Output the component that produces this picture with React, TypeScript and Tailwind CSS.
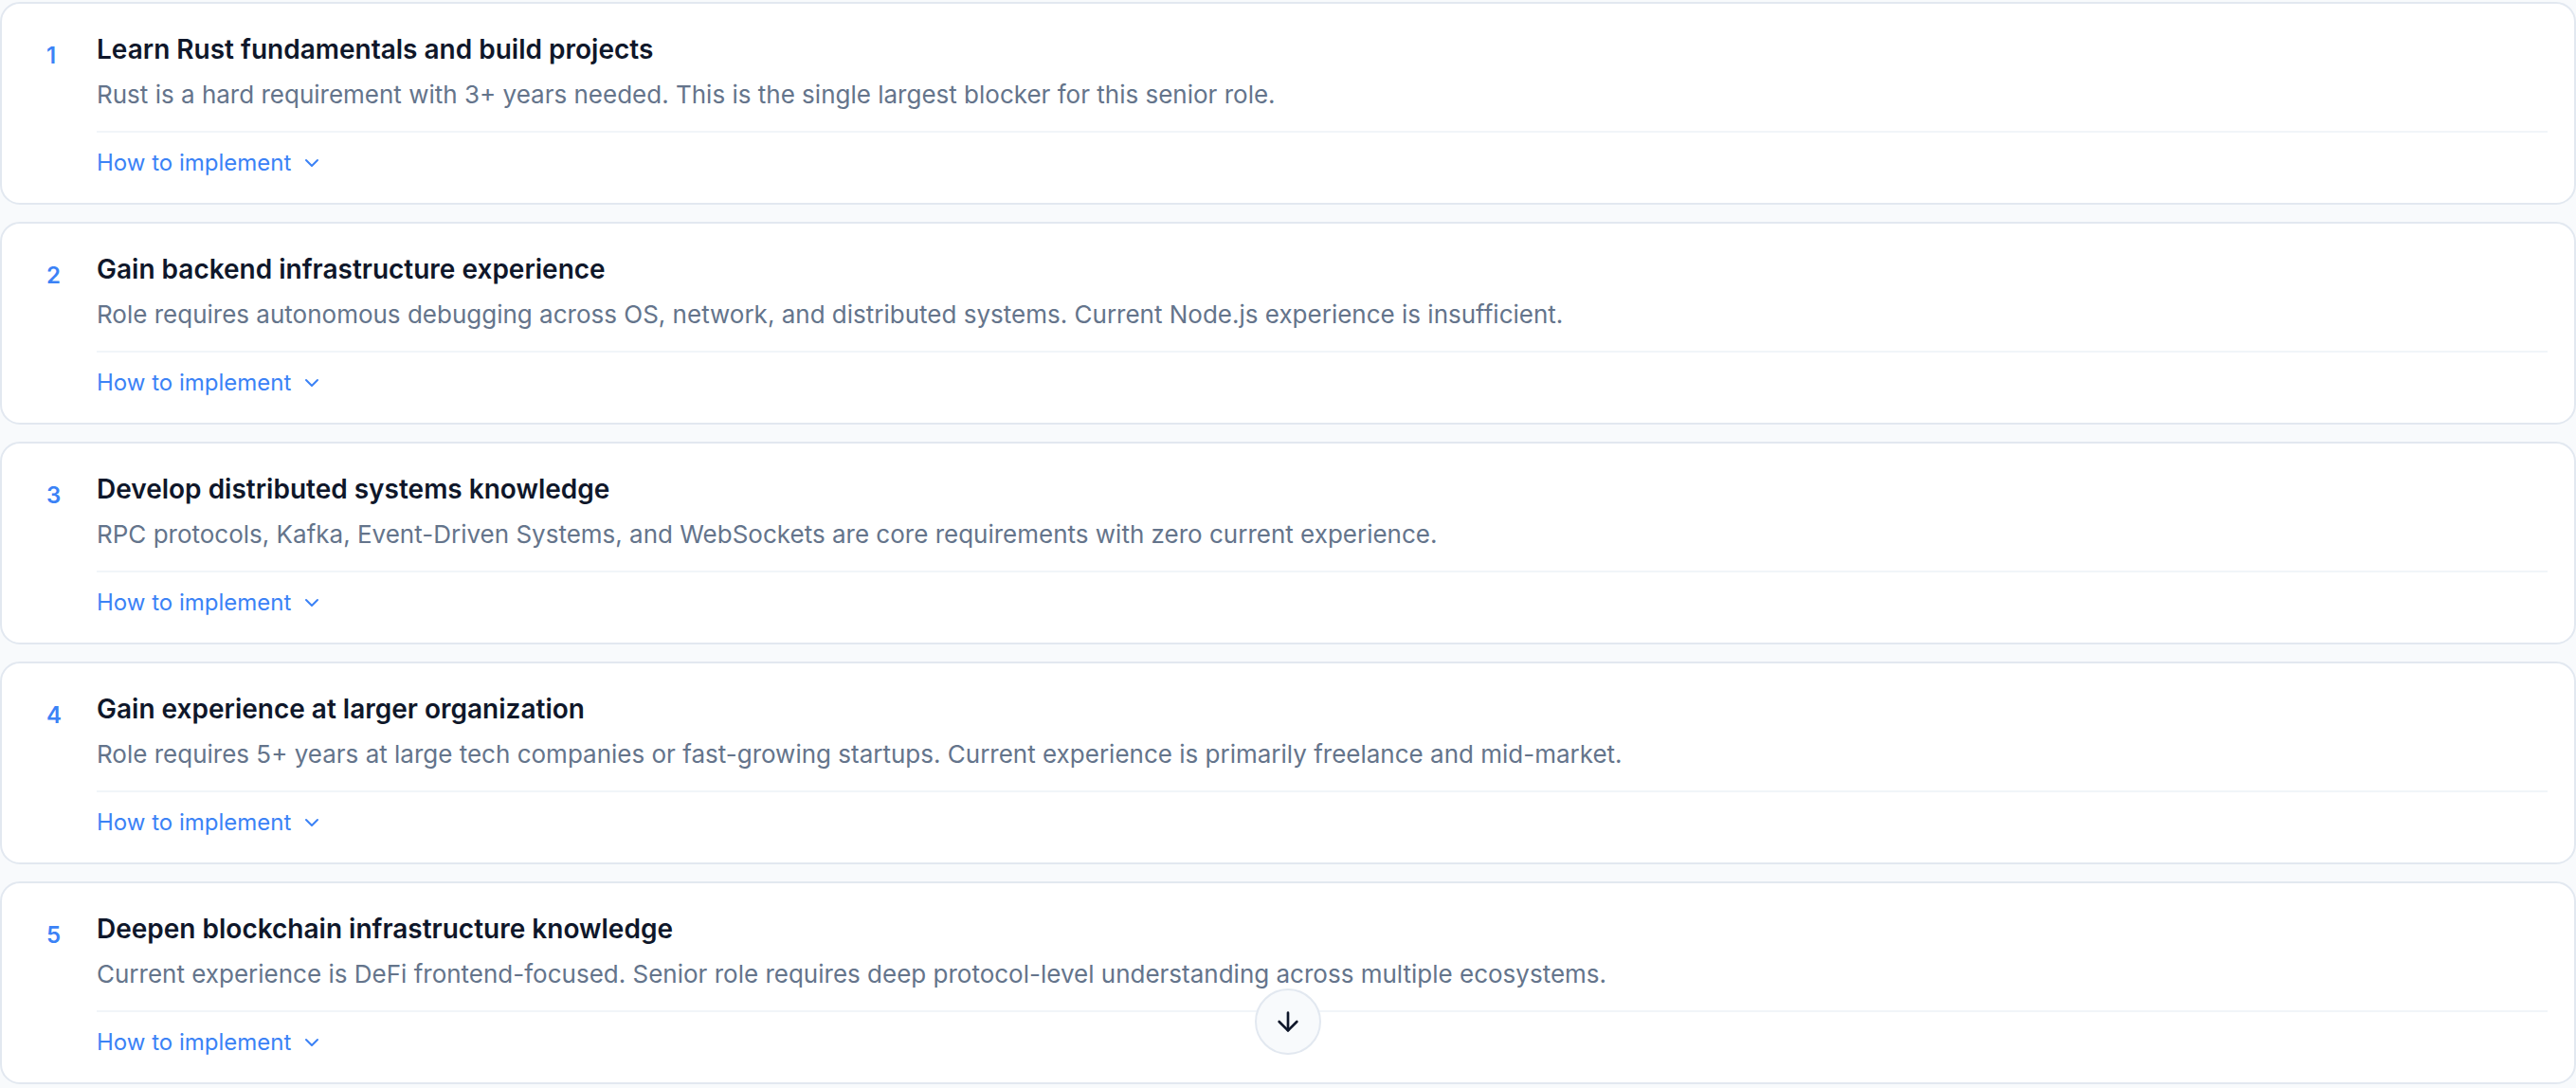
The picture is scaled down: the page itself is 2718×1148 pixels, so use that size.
import React from "react";
import { ChevronDown, ArrowDown } from "lucide-react";

const items = [
  {
    title: "Learn Rust fundamentals and build projects",
    desc: "Rust is a hard requirement with 3+ years needed. This is the single largest blocker for this senior role.",
  },
  {
    title: "Gain backend infrastructure experience",
    desc: "Role requires autonomous debugging across OS, network, and distributed systems. Current Node.js experience is insufficient.",
  },
  {
    title: "Develop distributed systems knowledge",
    desc: "RPC protocols, Kafka, Event-Driven Systems, and WebSockets are core requirements with zero current experience.",
  },
  {
    title: "Gain experience at larger organization",
    desc: "Role requires 5+ years at large tech companies or fast-growing startups. Current experience is primarily freelance and mid-market.",
  },
  {
    title: "Deepen blockchain infrastructure knowledge",
    desc: "Current experience is DeFi frontend-focused. Senior role requires deep protocol-level understanding across multiple ecosystems.",
  },
];

export default function App() {
  return (
    <div
      className="relative min-h-[1148px] w-full bg-[#f8fafc] pt-[2px]"
      style={{ fontFamily: "Inter, 'Noto Sans', sans-serif" }}
    >
      <div className="flex flex-col gap-[18px]">
        {items.map((it, i) => (
          <div
            key={i}
            className="flex rounded-[21px] border-2 border-[#e2e8f0] bg-white pl-[47px] pr-[28px] pt-[28px] pb-[24px]"
          >
            <div className="mt-[9px] w-[53px] shrink-0 text-[24px] font-semibold leading-[36px] text-[#3b82f6]">
              {i + 1}
            </div>
            <div className="flex min-w-0 flex-1 flex-col">
              <div className="text-[28px] font-semibold leading-[40px] text-[#0f172a]">
                {it.title}
              </div>
              <div className="mt-[8px] text-[26px] leading-[40px] text-[#64748b]">
                {it.desc}
              </div>
              <div className="mt-[18px] border-t-2 border-[#f1f5f9] pt-[14px]">
                <button className="flex items-center gap-[10px] text-[24px] font-normal leading-[36px] text-[#3b82f6]">
                  How to implement
                  <ChevronDown size={24} strokeWidth={2} />
                </button>
              </div>
            </div>
          </div>
        ))}
      </div>
      <button className="absolute bottom-[35px] left-1/2 flex h-[70px] w-[70px] -translate-x-1/2 items-center justify-center rounded-full border-2 border-[#e2e8f0] bg-[#f8fafc] text-[#0f172a]">
        <ArrowDown size={32} strokeWidth={2} />
      </button>
    </div>
  );
}
